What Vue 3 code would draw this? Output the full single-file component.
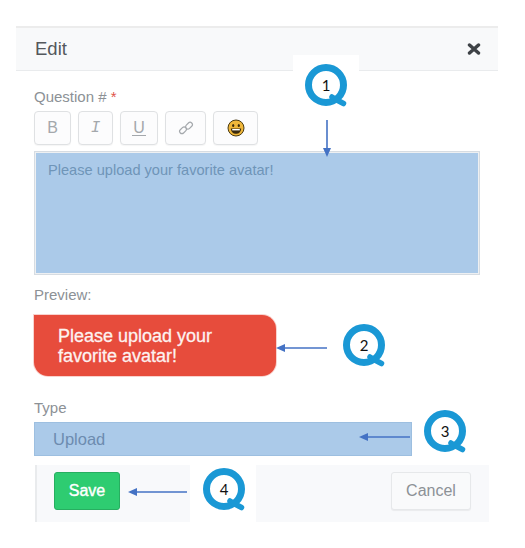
<script setup>
const tools = [
  { label: 'B', cls: 'tool-b' },
  { label: 'I', cls: 'tool-i' },
  { label: 'U', cls: 'tool-u' }
]

const markers = [
  { n: 1, cls: 'm1' },
  { n: 2, cls: 'm2' },
  { n: 3, cls: 'm3' },
  { n: 4, cls: 'm4' }
]
</script>

<template>
  <div class="page">
    <section class="modal">
      <header class="modal-head">
        <span class="modal-title">Edit</span>
        <svg class="close" width="14" height="12" viewBox="0 0 14 12">
          <path d="M2.5 2 L11.5 10 M11.5 2 L2.5 10" stroke="#3e4246" stroke-width="3.4" stroke-linecap="round" />
        </svg>
      </header>

      <div class="modal-body">
        <label class="field-label">Question # <span class="req">*</span></label>

        <div class="toolbar">
          <button v-for="t in tools" :key="t.label" class="tool" :class="t.cls">
            <span>{{ t.label }}</span>
          </button>
          <button class="tool tool-link">
            <svg width="16" height="16" viewBox="0 0 16 16" fill="none" stroke="#a4a8ac" stroke-width="1.2">
              <rect x="1.2" y="8" width="7.6" height="4.6" rx="2.3" transform="rotate(-45 5 10.3)" />
              <rect x="7.2" y="3.4" width="7.6" height="4.6" rx="2.3" transform="rotate(-45 11 5.7)" />
            </svg>
          </button>
          <button class="tool tool-emoji">
            <svg width="18" height="18" viewBox="0 0 18 18">
              <circle cx="9" cy="9" r="8" fill="#f0b73a" stroke="#4a3a12" stroke-width="1" />
              <ellipse cx="6.2" cy="6.4" rx="1.1" ry="1.5" fill="#3a2a0c" />
              <ellipse cx="11.8" cy="6.4" rx="1.1" ry="1.5" fill="#3a2a0c" />
              <path d="M3.8 9.4 H14.2 C14 13 11.6 14.8 9 14.8 C6.4 14.8 4 13 3.8 9.4 Z" fill="#3a2a0c" />
              <path d="M5.2 10 H12.8 V11.4 H5.2 Z" fill="#fff" />
            </svg>
          </button>
        </div>

        <div class="editor">Please upload your favorite avatar!</div>

        <label class="field-label preview-label">Preview:</label>
        <div class="bubble">Please upload your favorite avatar!</div>

        <label class="field-label type-label">Type</label>
        <div class="select">Upload</div>

        <footer class="modal-foot">
          <button class="btn-save">Save</button>
          <button class="btn-cancel">Cancel</button>
        </footer>
      </div>
    </section>

    <!-- white patches left behind the callouts -->
    <div class="patch patch-1"></div>
    <div class="patch patch-4"></div>

    <div v-for="m in markers" :key="m.n" class="marker" :class="m.cls">
      <svg width="48" height="48" viewBox="0 0 48 48" fill="none">
        <circle cx="21" cy="21" r="17.5" stroke="#1a98d5" stroke-width="7" />
        <path d="M27 33 L31 35.5 L38.5 39.5" stroke="#1a98d5" stroke-width="5.5" stroke-linecap="round" />
      </svg>
      <span class="marker-num">{{ m.n }}</span>
    </div>

    <svg class="arrow arrow-1" width="10" height="38" viewBox="0 0 10 38">
      <path d="M5 0 V30" stroke="#4472c4" stroke-width="1.6" />
      <path d="M1 28 H9 L5 37 Z" fill="#4472c4" />
    </svg>
    <svg class="arrow arrow-2" width="52" height="10" viewBox="0 0 52 10">
      <path d="M8 5 H51" stroke="#4472c4" stroke-width="1.6" />
      <path d="M9 1 V9 L0 5 Z" fill="#4472c4" />
    </svg>
    <svg class="arrow arrow-3" width="52" height="10" viewBox="0 0 52 10">
      <path d="M8 5 H51" stroke="#4472c4" stroke-width="1.6" />
      <path d="M9 1 V9 L0 5 Z" fill="#4472c4" />
    </svg>
    <svg class="arrow arrow-4" width="60" height="10" viewBox="0 0 60 10">
      <path d="M8 5 H59" stroke="#4472c4" stroke-width="1.6" />
      <path d="M9 1 V9 L0 5 Z" fill="#4472c4" />
    </svg>
  </div>
</template>

<style scoped>
.page {
  position: relative;
  width: 525px;
  height: 548px;
  background: #fff;
  overflow: hidden;
  padding: 26px 0 0 16px;
  box-sizing: border-box;
  font-family: "Liberation Sans", Arial, sans-serif;
}

.modal {
  width: 482px;
}

/* HEADER */
.modal-head {
  height: 45px;
  box-sizing: border-box;
  display: flex;
  align-items: center;
  justify-content: space-between;
  padding: 0 17px 0 19px;
  background: #f8f9fa;
  border-top: 2px solid #ececec;
  border-bottom: 1px solid #e9ebed;
}

.modal-title {
  font-size: 18.5px;
  color: #54585c;
}

/* BODY */
.modal-body {
  padding: 17px 0 0 18px;
}

.field-label {
  display: block;
  font-size: 15px;
  line-height: 18px;
  color: #8c9196;
}

.req {
  color: #e0544a;
}

.toolbar {
  display: flex;
  gap: 7px;
  margin-top: 5px;
}

.tool {
  height: 34px;
  padding: 0;
  box-sizing: border-box;
  display: flex;
  align-items: center;
  justify-content: center;
  background: #fcfcfd;
  border: 1px solid #dfe1e3;
  border-radius: 4px;
  box-shadow: 0 1px 1px rgba(0, 0, 0, 0.04);
  color: #a4a8ac;
  font-family: "Liberation Sans", sans-serif;
  font-size: 16px;
}

.tool-b { width: 37px; }
.tool-i { width: 35px; font-family: "Liberation Mono", monospace; font-style: italic; }
.tool-u { width: 38px; }
.tool-u span { border-bottom: 1px solid #a4a8ac; line-height: 15px; padding: 0 1px; }
.tool-link { width: 41px; }
.tool-emoji { width: 45px; }

.editor {
  width: 446px;
  height: 124px;
  box-sizing: border-box;
  margin-top: 6px;
  padding: 10px 13px;
  background: #abcae9;
  border: 1px solid #d6dce2;
  outline: 1px solid #eef0f2;
  outline-offset: -2px;
  font-size: 14.6px;
  color: #6f95b8;
}

.preview-label {
  margin-top: 11px;
}

.bubble {
  width: 242px;
  height: 61px;
  box-sizing: border-box;
  margin-top: 11px;
  padding: 11px 40px 0 24px;
  background: #e74c3c;
  border-radius: 0 14px 14px 14px;
  box-shadow: 0 0 0 1px rgba(231, 76, 60, 0.25);
  color: #fdf2f0;
  font-size: 18px;
  -webkit-text-stroke: 0.3px #fdf2f0;
  line-height: 20px;
}

.type-label {
  margin-top: 23px;
}

.select {
  width: 378px;
  height: 34px;
  box-sizing: border-box;
  margin-top: 5px;
  padding: 7px 18px 0;
  background: #abcae9;
  border: 1px solid #9dbfe0;
  font-size: 16.5px;
  color: #6d8cb0;
}

/* FOOTER */
.modal-foot {
  width: 454px;
  height: 57px;
  box-sizing: border-box;
  margin: 9px 0 0 1px;
  padding: 7px 18px 0 17px;
  display: flex;
  justify-content: space-between;
  align-items: flex-start;
  background: #f8f9fb;
  border-left: 2px solid #e9ebed;
}

.btn-save,
.btn-cancel {
  height: 38px;
  padding: 0;
  border-radius: 3px;
  font-family: inherit;
  font-size: 16px;
}

.btn-save {
  width: 66px;
  background: #2ecc71;
  border: 1px solid #27ae60;
  color: #fff;
  -webkit-text-stroke: 0.4px #fff;
}

.btn-cancel {
  width: 80px;
  background: #f9fafb;
  border: 1px solid #e6e8ea;
  box-shadow: 0 1px 1px rgba(0, 0, 0, 0.06);
  color: #8c9196;
}

/* CALLOUTS */
.patch {
  position: absolute;
  width: 66px;
  background: #fff;
}

.patch-1 { left: 293px; top: 55px; height: 16px; }
.patch-4 { left: 190px; top: 465px; height: 62px; }

.marker {
  position: absolute;
  width: 48px;
  height: 48px;
}

.m1 { left: 305px; top: 64px; }
.m2 { left: 343px; top: 324px; }
.m3 { left: 424px; top: 410px; }
.m4 { left: 203px; top: 468px; }

.marker-num {
  position: absolute;
  left: 0;
  top: 12px;
  width: 42px;
  text-align: center;
  font-family: Lato, "Liberation Sans", sans-serif;
  font-size: 15px;
  line-height: 18px;
  color: #111;
}

.arrow {
  position: absolute;
}

.arrow-1 { left: 322px; top: 120px; }
.arrow-2 { left: 276px; top: 343px; }
.arrow-3 { left: 359px; top: 432px; }
.arrow-4 { left: 128px; top: 487px; }
</style>
